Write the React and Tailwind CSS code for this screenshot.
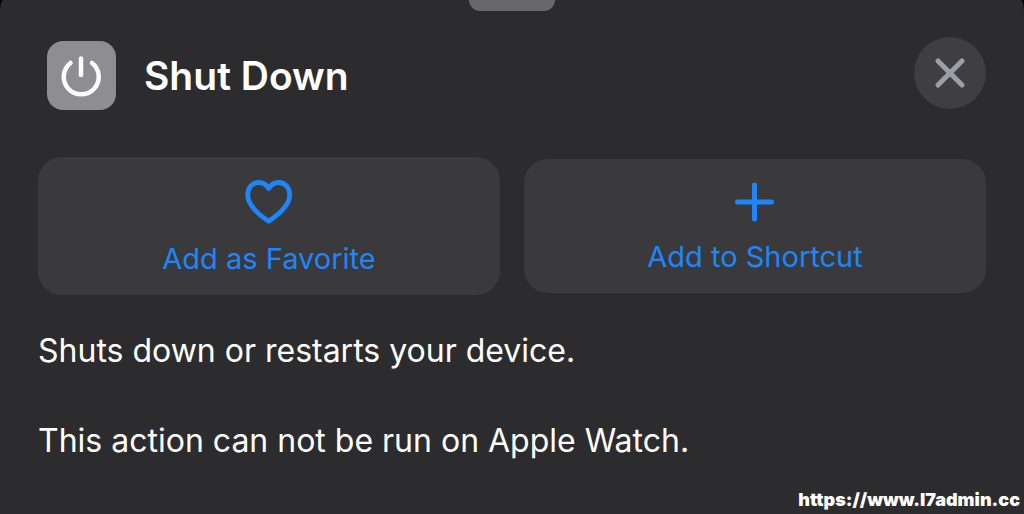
function PowerIcon() {
  return (
    <svg viewBox="0 0 69 69" className="w-full h-full" fill="none" stroke="white" strokeWidth="4.5" strokeLinecap="round">
      <path d="M34 17.5v16.5" />
      <path d="M23.5 22a17.5 17.5 0 1 0 21.5 0" />
    </svg>
  );
}

function HeartIcon() {
  return (
    <svg viewBox="0 0 48 44" className="w-12 h-11" fill="none" stroke="currentColor" strokeWidth="4.8" strokeLinejoin="round">
      <path d="M23.7 41.2C12 33.5 2.7 25 2.7 14.8C2.7 7.6 7.500 2.5 13.8 2.5C18.2 2.5 21.500 4.800 23.7 8.500C25.900 4.800 29.200 2.5 33.6 2.5C39.900 2.5 44.7 7.6 44.7 14.8C44.7 25 35.400 33.5 23.7 41.2Z" />
    </svg>
  );
}

function PlusIcon() {
  return (
    <svg viewBox="0 0 40 40" className="w-10 h-10" fill="none" stroke="currentColor" strokeWidth="5" strokeLinecap="round">
      <path d="M19.5 3v34M2.5 20h34" />
    </svg>
  );
}

function CloseIcon() {
  return (
    <svg viewBox="0 0 32 32" className="w-8 h-8" fill="none" stroke="currentColor" strokeWidth="5" strokeLinecap="round">
      <path d="M4 4l24 24M28 4L4 28" />
    </svg>
  );
}

function ActionButton({ icon, label }) {
  return (
    <button className="flex-1 flex flex-col items-center gap-[17px] pt-[23px] pb-[18px] bg-[#3a3a3c] text-[#1e86f8] rounded-3xl">
      {icon}
      <span className="text-[29px] leading-9">{label}</span>
    </button>
  );
}

function App() {
  return (
    <div className="min-h-screen bg-black">
      <div className="min-h-screen bg-[#2c2c2e] text-white font-['Inter',sans-serif] flex flex-col rounded-t-[3px_12px]">
        {/* Grabber */}
        <div className="w-[86px] h-[11px] bg-[#67666b] rounded-b-full self-center" />

        <header className="flex items-center gap-7 pl-[47px] pr-[38px] mt-[25px]">
          <div className="flex-1 flex items-center gap-7 pt-[5px]">
            <div className="w-[69px] h-[69px] rounded-2xl bg-[#8e8d92]">
              <PowerIcon />
            </div>
            <h1 className="text-[39px] leading-12 font-semibold">Shut Down</h1>
          </div>
          <button aria-label="Close" className="w-[72px] h-[72px] rounded-full bg-[#3f3f43] text-[#9e9ea5] flex items-center justify-center">
            <CloseIcon />
          </button>
        </header>

        <div className="flex items-center gap-6 px-[38px] mt-[47px]">
          <ActionButton icon={<HeartIcon />} label="Add as Favorite" />
          <ActionButton icon={<PlusIcon />} label="Add to Shortcut" />
        </div>

        <main className="px-[38px] mt-[33px] text-[32px] leading-[45px]">
          <p>Shuts down or restarts your device.</p>
          <p className="mt-[45px]">This action can not be run on Apple Watch.</p>
        </main>

        <footer className="mt-auto px-1 text-right text-lg leading-7 font-black">https://www.l7admin.cc</footer>
      </div>
    </div>
  );
}

export default App;
